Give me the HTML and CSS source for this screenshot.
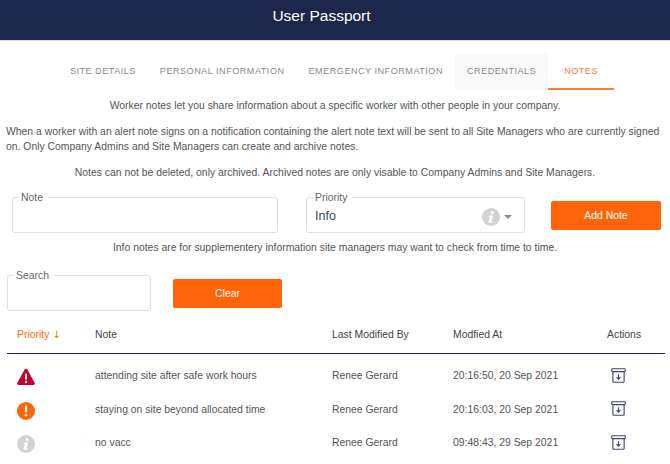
FILE: index.html
```html
<!DOCTYPE html>
<html lang="en">
<head>
<meta charset="utf-8">
<title>User Passport</title>
<link rel="stylesheet" href="styles.css">
</head>
<body>
<header class="topbar">User Passport</header>
<nav class="tabs">
  <a class="tab">SITE DETAILS</a>
  <a class="tab">PERSONAL INFORMATION</a>
  <a class="tab">EMERGENCY INFORMATION</a>
  <a class="tab tab-hover">CREDENTIALS</a>
  <a class="tab tab-active">NOTES</a>
</nav>
<main class="content">
  <p class="para center first">Worker notes let you share information about a specific worker with other people in your company.</p>
  <p class="para">When a worker with an alert note signs on a notification containing the alert note text will be sent to all Site Managers who are currently signed on. Only Company Admins and Site Managers can create and archive notes.</p>
  <p class="para center">Notes can not be deleted, only archived. Archived notes are only visable to Company Admins and Site Managers.</p>

  <section class="note-form">
    <fieldset class="field field-note"><legend>Note</legend></fieldset>
    <fieldset class="field field-priority">
      <legend>Priority</legend>
      <span class="select-value">Info</span>
      <svg class="icon-info-small" viewBox="0 0 18 18"><use href="#info"/></svg>
      <span class="caret"></span>
    </fieldset>
    <button class="btn btn-add">Add Note</button>
  </section>
  <p class="hint">Info notes are for supplementery information site managers may want to check from time to time.</p>

  <section class="search-row">
    <fieldset class="field field-search"><legend>Search</legend></fieldset>
    <button class="btn btn-clear">Clear</button>
  </section>

  <div class="table">
    <div class="row head">
      <div class="c-priority sorted">Priority <span class="arrow">↓</span></div>
      <div class="c-note">Note</div>
      <div class="c-by">Last Modified By</div>
      <div class="c-at">Modfied At</div>
      <div class="c-act">Actions</div>
    </div>
    <div class="row">
      <div class="c-priority"><svg class="icon" viewBox="0 0 18 18"><path d="M9 .8a1.6 1.6 0 0 1 1.4.8l7.2 13.2a1.4 1.4 0 0 1-1.2 2.1H1.6a1.4 1.4 0 0 1-1.2-2.1L7.6 1.6A1.6 1.6 0 0 1 9 .8z" fill="#c1032c"/><rect x="8" y="5.6" width="2" height="6.2" rx=".8" fill="#fff"/><circle cx="9" cy="14" r="1.2" fill="#fff"/></svg></div>
      <div class="c-note">attending site after safe work hours</div>
      <div class="c-by">Renee Gerard</div>
      <div class="c-at">20:16:50, 20 Sep 2021</div>
      <div class="c-act"><svg class="archive" viewBox="0 0 16 16"><use href="#archive"/></svg></div>
    </div>
    <div class="row">
      <div class="c-priority"><svg class="icon" viewBox="0 0 18 18"><circle cx="9" cy="9" r="9" fill="#ff6508"/><rect x="7.9" y="3.6" width="2.2" height="7" rx="1" fill="#fff"/><circle cx="9" cy="13.2" r="1.3" fill="#fff"/></svg></div>
      <div class="c-note">staying on site beyond allocated time</div>
      <div class="c-by">Renee Gerard</div>
      <div class="c-at">20:16:03, 20 Sep 2021</div>
      <div class="c-act"><svg class="archive" viewBox="0 0 16 16"><use href="#archive"/></svg></div>
    </div>
    <div class="row">
      <div class="c-priority"><svg class="icon" viewBox="0 0 18 18"><use href="#info"/></svg></div>
      <div class="c-note">no vacc</div>
      <div class="c-by">Renee Gerard</div>
      <div class="c-at">09:48:43, 29 Sep 2021</div>
      <div class="c-act"><svg class="archive" viewBox="0 0 16 16"><use href="#archive"/></svg></div>
    </div>
  </div>
</main>

<svg class="defs" aria-hidden="true">
  <symbol id="info" viewBox="0 0 18 18">
    <circle cx="9" cy="9" r="9" fill="#d2d2d2"/>
    <circle cx="10.2" cy="4.6" r="1.6" fill="#fff"/>
    <path d="M6.9 7.6h4.2l-1.6 6h1.3l-.3 1.2H6.3l1.6-6H6.6z" fill="#fff"/>
  </symbol>
  <symbol id="archive" viewBox="0 0 16 16">
    <rect x=".8" y=".8" width="14.4" height="3" rx=".8" fill="none" stroke="#3d4668" stroke-width="1.2"/>
    <path d="M2 3.8v10.4a1 1 0 0 0 1 1h10a1 1 0 0 0 1-1V3.8" fill="none" stroke="#3d4668" stroke-width="1.2"/>
    <path d="M8 6.6v5M5.9 9.8 8 12l2.1-2.2" fill="none" stroke="#3d4668" stroke-width="1.2"/>
  </symbol>
</svg>
</body>
</html>
```
FILE: styles.css
```css
* { box-sizing: border-box; }
html, body { margin: 0; padding: 0; }
body {
  width: 670px;
  height: 464px;
  overflow: hidden;
  background: #fff;
  font-family: "Liberation Sans", Arial, sans-serif;
  font-size: 10.4px;
  color: #555;
}
.topbar {
  height: 41px;
  padding-right: 27px;
  background: #1c274c;
  border-bottom: 1px solid #d8d9e0;
  color: #fff;
  font-size: 15.5px;
  line-height: 32px;
  text-align: center;
}
.tabs {
  display: flex;
  justify-content: flex-end;
  height: 36px;
  margin-top: 13px;
  padding-right: 56px;
}
.tab {
  padding: 0 12px;
  font-size: 9.1px;
  letter-spacing: .5px;
  line-height: 35px;
  color: #8a8a8a;
  white-space: nowrap;
}
.tab-hover { background: #f9f9f9; }
.tab-active { padding: 0 16px; color: #ff7a3c; border-bottom: 2px solid #ff7a3c; }
.content { padding: 0 6px; }
.para {
  margin: 11px 0 0;
  line-height: 15px;
}
.para.first { margin-top: 8px; }
.center { text-align: center; }
.note-form {
  display: flex;
  align-items: flex-start;
  gap: 28px;
  margin-top: 11px;
  padding-left: 6px;
}
.field {
  position: relative;
  margin: 0;
  padding: 0 0 0 7px;
  border: 1px solid #dfdfdf;
  border-radius: 3px;
  min-width: 0;
}
.field legend {
  position: relative;
  top: 1px;
  padding: 0 5px 0 1px;
  font-size: 10.4px;
  line-height: 12px;
  color: #666;
}
.field-note { width: 266px; height: 42px; }
.field-priority { width: 219px; height: 42px; display: flex; align-items: center; }
.select-value { font-size: 12.5px; color: #3d4668; margin: -3px 0 0 1px; }
.icon-info-small { position: absolute; right: 24px; top: 5px; width: 18px; height: 18px; }
.caret {
  position: absolute;
  right: 12px;
  top: 12px;
  border: 4px solid transparent;
  border-top: 4px solid #8d8d8d;
  border-bottom: 0;
}
.btn {
  height: 29px;
  border: 0;
  border-radius: 2px;
  background: #ff6508;
  color: #fff;
  font: inherit;
  font-size: 10.4px;
}
.btn-add { width: 110px; margin: 10px 0 0 -2px; }
.hint { margin: 7px 0 0; line-height: 15px; text-align: center; }
.search-row {
  display: flex;
  align-items: flex-start;
  gap: 21px;
  margin-top: 14px;
  padding-left: 1px;
}
.field-search { width: 144px; height: 42px; }
.btn-clear { width: 109px; margin: 10px 0 0 1px; }
.table { margin: 3px -1px 0 1px; }
.row { display: flex; align-items: center; height: 33.5px; padding-left: 10px; color: #555; }
.head { height: 40px; padding-top: 1px; border-bottom: 1.5px solid #1c274c; color: #444; margin-bottom: 5px; }
.c-priority { width: 78px; }
.sorted { color: #ff6508; }
.arrow { font-family: "DejaVu Sans", sans-serif; font-size: 10px; }
.c-note { width: 237px; }
.c-by { width: 121px; }
.c-at { width: 154px; }
.c-act { width: 58px; white-space: nowrap; }
.icon { display: block; width: 18px; height: 18px; margin-top: 3px; }
.archive { display: block; width: 15px; height: 15px; margin-left: 4px; margin-top: -1px; }
.defs { display: none; }
```
